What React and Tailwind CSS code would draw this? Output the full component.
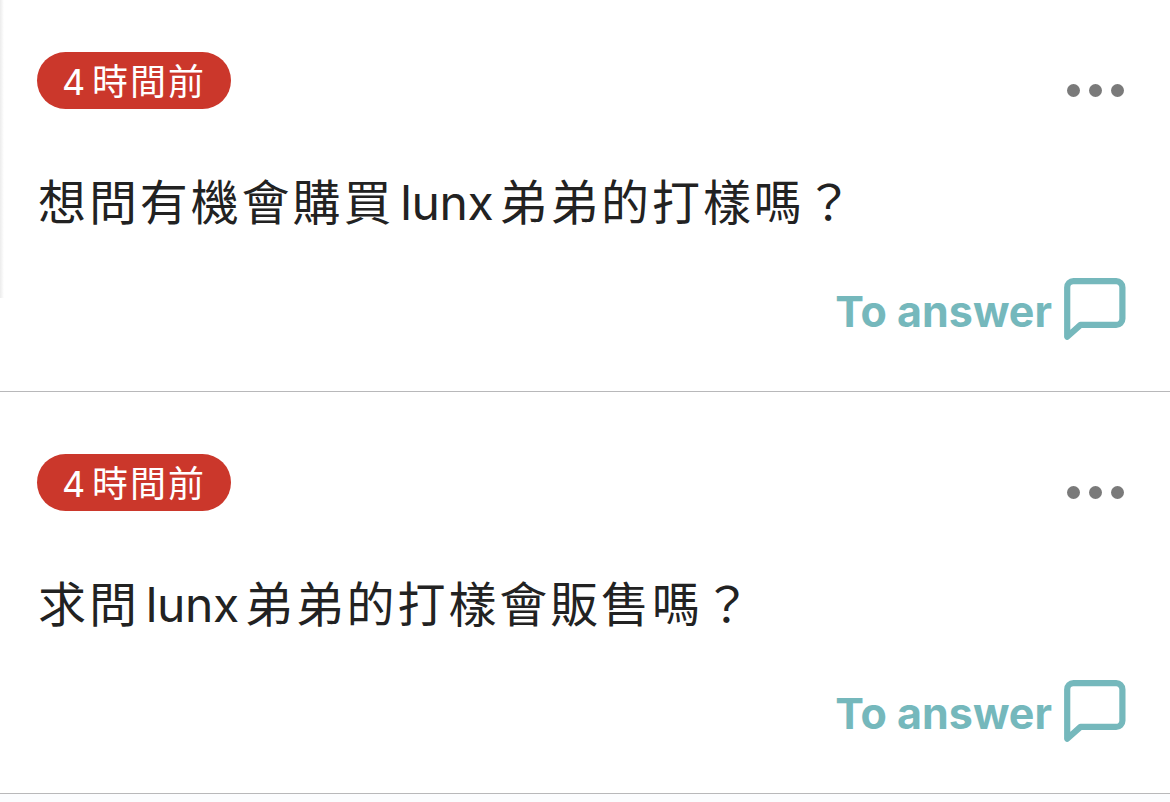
import React from 'react';

const questions = [
    { id: 1, time: ['4', '時間前'], text: ['想問有機會購買', 'lunx', '弟弟的打樣嗎？'] },
    { id: 2, time: ['4', '時間前'], text: ['求問', 'lunx', '弟弟的打樣會販售嗎？'] }
];

const AnswerIcon = () => (
    <svg className="w-[64px] h-[64px]" viewBox="0 0 64 64" fill="none" stroke="currentColor" strokeWidth="6.2" strokeLinejoin="round">
        <path d="M4.2 59.7V10.4a6.2 6.2 0 0 1 6.2-6.2h42.8a6.2 6.2 0 0 1 6.2 6.2v31.3a6.2 6.2 0 0 1-6.2 6.2H17.5z" />
    </svg>
);

const Question = ({ time, text }) => (
    <article className="flex flex-col h-[402px] pt-[62px] pl-[37px] pr-[43px] bg-white border-b border-[#b8b8ba]">
        <div className="flex items-start justify-between">
            <span className="flex items-center w-[194px] h-[57px] pt-[2px] pl-[25px] rounded-full bg-[#cb372b] text-white text-[36px] leading-none">
                <span className="w-[30px]">{time[0]}</span>
                <span className="tracking-[2px]">{time[1]}</span>
            </span>
            <button className="flex gap-[9px] mt-[32px] mr-[3px]">
                <i className="w-[13px] h-[13px] rounded-full bg-[#7a7a7a]" />
                <i className="w-[13px] h-[13px] rounded-full bg-[#7a7a7a]" />
                <i className="w-[13px] h-[13px] rounded-full bg-[#7a7a7a]" />
            </button>
        </div>
        <p className="flex mt-[58px] h-[72px] pl-px items-center text-[48px] whitespace-nowrap text-[#222222]">
            <span className="tracking-[2.9px]">{text[0]}</span>
            <span className="w-[105px] pl-[6px] tracking-[-0.4px]">{text[1]}</span>
            <span className="tracking-[2.9px]">{text[2]}</span>
        </p>
        <button className="flex self-end items-center gap-[11px] mt-[38px] text-[#75b8bc]">
            <span className="pt-[5px] text-[43px] font-bold leading-none">To answer</span>
            <AnswerIcon />
        </button>
    </article>
);

export default function App() {
    return (
        <main className="relative h-[802px] overflow-hidden bg-[#fbfcfe] font-['Inter','Noto_Sans_CJK_TC',sans-serif] font-normal">
            <div className="-mt-[10px]">
                {questions.map(q => (
                    <Question key={q.id} time={q.time} text={q.text} />
                ))}
            </div>
            <div className="absolute left-0 top-0 w-[4px] h-[298px] bg-linear-to-r from-[#ececec] to-white" />
        </main>
    );
}
